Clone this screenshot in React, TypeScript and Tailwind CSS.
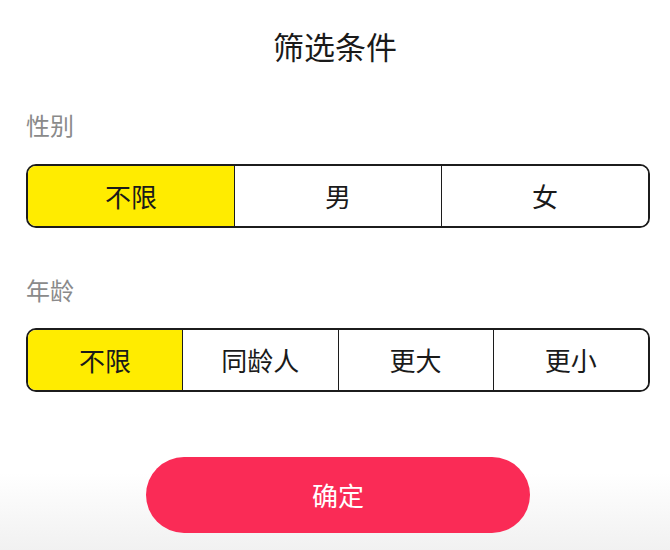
import { useState } from "react";

const font = { fontFamily: '"Noto Sans CJK SC", "Noto Sans", sans-serif' };

interface SegmentedProps {
  options: string[];
  value: number;
  onChange: (i: number) => void;
}

function Segmented({ options, value, onChange }: SegmentedProps) {
  return (
    <div className="ml-[26px] mr-[20px] flex h-[64px] overflow-hidden rounded-[10px] border-2 border-[#1c1c1c]">
      {options.map((opt, i) => (
        <button
          key={opt}
          onClick={() => onChange(i)}
          className={`flex flex-1 items-center justify-center text-[26px] leading-none text-[#1a1a1a] ${
            i > 0 ? "border-l-[1.5px] border-[#1c1c1c]" : ""
          } ${i === value ? "bg-[#ffec00]" : "bg-white"}`}
        >
          {opt}
        </button>
      ))}
    </div>
  );
}

export default function App() {
  const [gender, setGender] = useState(0);
  const [age, setAge] = useState(0);

  return (
    <div
      style={font}
      className="flex h-[550px] w-[670px] flex-col bg-[linear-gradient(to_bottom,#ffffff_0%,#ffffff_86%,#f1f1f1_100%)]"
    >
      <h1 className="pt-[28px] text-center text-[31px] leading-[36px] font-normal text-[#1a1a1a]">
        筛选条件
      </h1>

      <div className="mt-[45px] px-[26px] text-[24px] leading-[32px] text-[#8a8a8a]">性别</div>
      <div className="mt-[23px]">
        <Segmented options={["不限", "男", "女"]} value={gender} onChange={setGender} />
      </div>

      <div className="mt-[46px] px-[26px] text-[24px] leading-[32px] text-[#8a8a8a]">年龄</div>
      <div className="mt-[22px]">
        <Segmented options={["不限", "同龄人", "更大", "更小"]} value={age} onChange={setAge} />
      </div>

      <button className="mt-[65px] ml-[146px] flex h-[76px] w-[384px] items-center justify-center rounded-full bg-[#fa2b56] text-[26px] leading-none text-white">
        确定
      </button>
    </div>
  );
}
